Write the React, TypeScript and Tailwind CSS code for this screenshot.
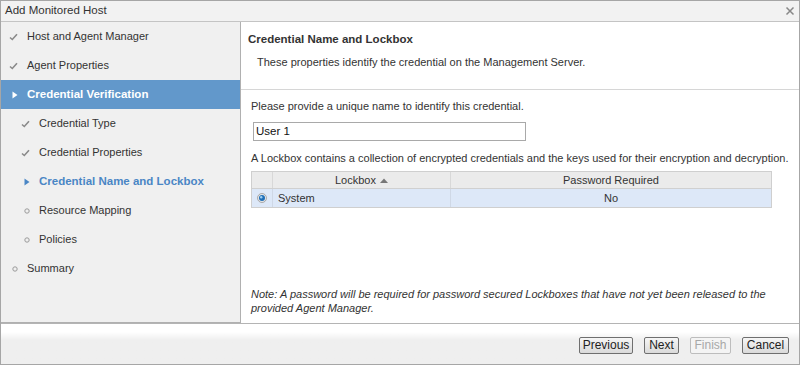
import React from "react";

const Check = () => (
  <svg width="9" height="8" viewBox="0 0 9 8">
    <polyline points="1,4.5 3.3,6.5 8,1.2" fill="none" stroke="#8a8a8a" strokeWidth="1.6" />
  </svg>
);
const Tri = ({ color }: { color: string }) => (
  <svg width="6" height="8" viewBox="0 0 6 8">
    <polygon points="0.5,0.5 5.5,4 0.5,7.5" fill={color} />
  </svg>
);
const Bullet = () => (
  <svg width="6" height="6" viewBox="0 0 6 6">
    <circle cx="3" cy="3" r="2.2" fill="none" stroke="#9a9a9a" strokeWidth="1" />
  </svg>
);

type Item = { label: string; level: 1 | 2; state: "done" | "current" | "sel" | "todo" };
const items: Item[] = [
  { label: "Host and Agent Manager", level: 1, state: "done" },
  { label: "Agent Properties", level: 1, state: "done" },
  { label: "Credential Verification", level: 1, state: "current" },
  { label: "Credential Type", level: 2, state: "done" },
  { label: "Credential Properties", level: 2, state: "done" },
  { label: "Credential Name and Lockbox", level: 2, state: "sel" },
  { label: "Resource Mapping", level: 2, state: "todo" },
  { label: "Policies", level: 2, state: "todo" },
  { label: "Summary", level: 1, state: "todo" },
];

function NavItem({ it }: { it: Item }) {
  const current = it.state === "current";
  const icon =
    it.state === "done" ? <Check /> : it.state === "todo" ? <Bullet /> : <Tri color={current ? "#ffffff" : "#4a86c5"} />;
  return (
    <div className={`h-[29px] flex items-center ${current ? "bg-[#6298cb]" : ""}`}>
      <div className={`${it.level === 1 ? "w-[26px]" : "w-[38px]"} flex justify-end pr-[9px]`}>{icon}</div>
      <span
        className={
          current
            ? "text-white font-bold text-[11.5px]"
            : it.state === "sel"
            ? "text-[#4a86c5] font-bold text-[11.5px]"
            : "text-[#333] text-[11px]"
        }
      >
        {it.label}
      </span>
    </div>
  );
}

function Btn({ label, w, disabled }: { label: string; w: string; disabled?: boolean }) {
  return (
    <div
      className={`${w} h-[17px] flex items-center justify-center rounded-[2px] border text-[12px] ${
        disabled
          ? "border-[#bdbdbd] text-[#a8a8a8] bg-[#f4f4f4]"
          : "border-[#6f6f6f] text-[#222] bg-gradient-to-b from-[#f6f6f6] to-[#dadada]"
      }`}
    >
      {label}
    </div>
  );
}

export default function App() {
  return (
    <div className="w-[800px] h-[365px] flex flex-col border border-[#a6a6a6] bg-white text-[#333] [font-family:'Liberation_Sans',Arial,sans-serif] overflow-hidden">
      <div className="h-[21px] shrink-0 bg-[#f2f2f2] border-b border-[#c4c4c4] flex items-center justify-between pl-[4px] pr-[4px]">
        <span className="text-[11.5px] text-[#333]">Add Monitored Host</span>
        <svg width="10" height="10" viewBox="0 0 10 10">
          <path d="M1.5 1.5 L8.5 8.5 M8.5 1.5 L1.5 8.5" stroke="#888" strokeWidth="1.5" />
        </svg>
      </div>
      <div className="h-[301px] shrink-0 flex">
        <div className="w-[240px] shrink-0 bg-[#f0f0f0] border-r border-b border-[#b0b0b0] flex flex-col">
          {items.map((it) => (
            <NavItem key={it.label} it={it} />
          ))}
        </div>
        <div className="flex-1 flex flex-col min-w-0">
          <div className="h-[68px] shrink-0 border-b border-[#d6d6d6] pl-[7px] pt-[10px]">
            <div className="text-[11.5px] font-bold text-[#333] leading-[14px]">Credential Name and Lockbox</div>
            <div className="text-[11px] text-[#333] pl-[9px] mt-[9px] leading-[14px]">
              These properties identify the credential on the Management Server.
            </div>
          </div>
          <div className="flex-1 flex flex-col pl-[10px] pr-[10px] pt-[9px] pb-[8px] text-[11px]">
            <div className="leading-[14px]">Please provide a unique name to identify this credential.</div>
            <div className="mt-[9px] ml-[2px] w-[273px] h-[19px] border border-[#a9a9a9] flex items-center pl-[2px] text-[11.5px] text-[#111]">
              User 1
            </div>
            <div className="mt-[10px] leading-[14px] whitespace-nowrap">
              A Lockbox contains a collection of encrypted credentials and the keys used for their encryption and decryption.
            </div>
            <div className="mt-[6px] w-[521px] border border-[#cfcfcf]">
              <div className="flex h-[17px] bg-[#ebebeb] border-b border-[#d0d0d0]">
                <div className="w-[21px] border-r border-[#d8d8d8]" />
                <div className="w-[178px] border-r border-[#d8d8d8] flex items-center justify-center gap-[4px]">
                  Lockbox
                  <svg width="8" height="5" viewBox="0 0 8 5">
                    <polygon points="0,5 4,0.5 8,5" fill="#777" />
                  </svg>
                </div>
                <div className="flex-1 flex items-center justify-center">Password Required</div>
              </div>
              <div className="flex h-[18px] bg-[#dde8f8]">
                <div className="w-[21px] border-r border-[#cfd8e6] flex items-center justify-center">
                  <svg width="10" height="10" viewBox="0 0 10 10">
                    <circle cx="5" cy="5" r="4.5" fill="#e6e6e6" stroke="#9a9a9a" strokeWidth="0.8" />
                    <circle cx="5" cy="5" r="3" fill="#1f6fb8" />
                    <circle cx="4.2" cy="4.2" r="1.2" fill="#9fd0f5" />
                  </svg>
                </div>
                <div className="w-[178px] border-r border-[#cfd8e6] flex items-center pl-[5px]">System</div>
                <div className="flex-1 flex items-center justify-center">No</div>
              </div>
            </div>
            <div className="mt-auto w-[530px] italic leading-[14px] text-[#333]">
              Note: A password will be required for password secured Lockboxes that have not yet been released to the provided Agent Manager.
            </div>
          </div>
        </div>
      </div>
      <div className="flex-1 border-t border-[#b4b4b4] bg-gradient-to-b from-white from-[20%] to-[#efefef] to-[40%] flex items-center justify-end gap-[11px] pr-[10px] pt-[2px]">
        <Btn label="Previous" w="w-[54px]" />
        <Btn label="Next" w="w-[35px]" />
        <Btn label="Finish" w="w-[41px]" disabled />
        <Btn label="Cancel" w="w-[47px]" />
      </div>
    </div>
  );
}
